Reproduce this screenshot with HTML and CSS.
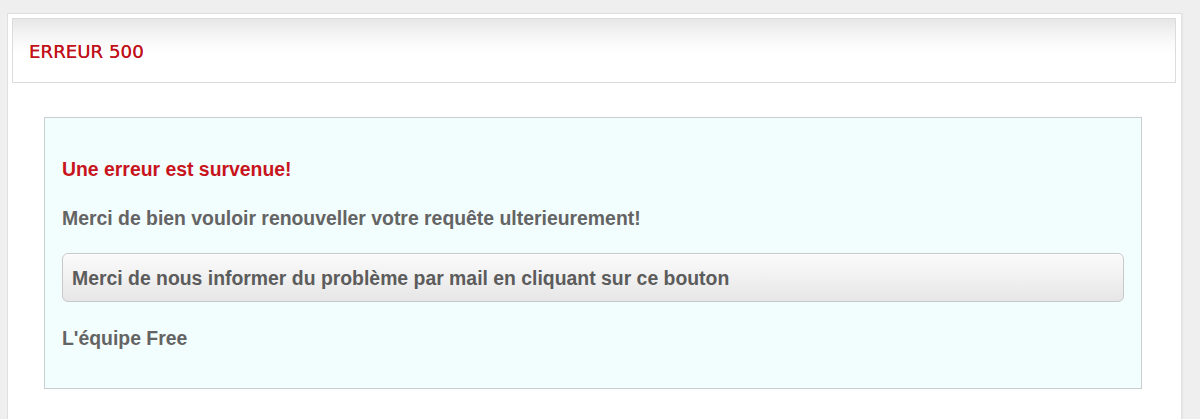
FILE: index.html
```html
<!DOCTYPE html>
<html lang="fr">
<head>
<meta charset="utf-8">
<title>Erreur 500</title>
<link rel="stylesheet" href="styles.css">
</head>
<body>
<div class="page">
  <div class="header">
    <h1 class="title">ERREUR 500</h1>
  </div>
  <div class="content">
    <div class="notice">
      <h2 class="notice-title">Une erreur est survenue!</h2>
      <p class="notice-text">Merci de bien vouloir renouveller votre requête ulterieurement!</p>
      <button class="mail-btn" type="button">Merci de nous informer du problème par mail en cliquant sur ce bouton</button>
      <p class="notice-sign">L'équipe Free</p>
    </div>
  </div>
</div>
</body>
</html>
```
FILE: styles.css
```css
html, body {
  margin: 0;
  padding: 0;
}
body {
  background: #efefef;
  font-family: "Liberation Sans", Arial, sans-serif;
  overflow: hidden;
}
.page {
  margin: 13px 18px 0 7px;
  background: #fff;
  border: 1px solid #e0e0e0;
  padding: 4px 5px 0 4px;
  min-height: 460px;
  box-shadow: 1px 0 2px rgba(0,0,0,0.04);
}
.header {
  height: 63px;
  border: 1px solid #dcdcdc;
  background: linear-gradient(to bottom, #e6e6e6 0px, #f3f3f3 14px, #fcfcfc 28px, #ffffff 34px, #ffffff 100%);
  display: flex;
  align-items: center;
  padding-left: 16px;
}
.title {
  margin: 0;
  font-family: "DejaVu Sans", Tahoma, sans-serif;
  font-weight: normal;
  font-size: 18.2px;
  line-height: 22px;
  padding-top: 2px;
  color: #c0121a;
  text-shadow: 0 0 0.6px #c0121a;
}
.content {
  padding: 34px 34px 0 32px;
}
.notice {
  background: #f2fdfe;
  border: 1px solid #c9cfd1;
  padding: 40px 17px 39px 17px;
}
.notice-title,
.notice-text,
.notice-sign {
  font-size: 19.4px;
  line-height: 22px;
  font-weight: bold;
}
.notice-title {
  margin: 0;
  color: #c8141c;
}
.notice-text {
  margin: 27px 0 0;
  color: #646464;
}
.mail-btn {
  display: block;
  width: 100%;
  margin-top: 24px;
  height: 49px;
  text-align: left;
  padding: 2px 9px 0;
  border: 1px solid #c8c8c8;
  border-radius: 6px;
  background: linear-gradient(to bottom, #fafafa 0%, #f1f1f1 50%, #e6e6e6 100%);
  box-shadow: inset 0 1px 0 #fff;
  font-family: "Liberation Sans", Arial, sans-serif;
  font-size: 19.4px;
  font-weight: bold;
  color: #5c5c5c;
}
.notice-sign {
  margin: 25px 0 0;
  color: #646464;
}
```
